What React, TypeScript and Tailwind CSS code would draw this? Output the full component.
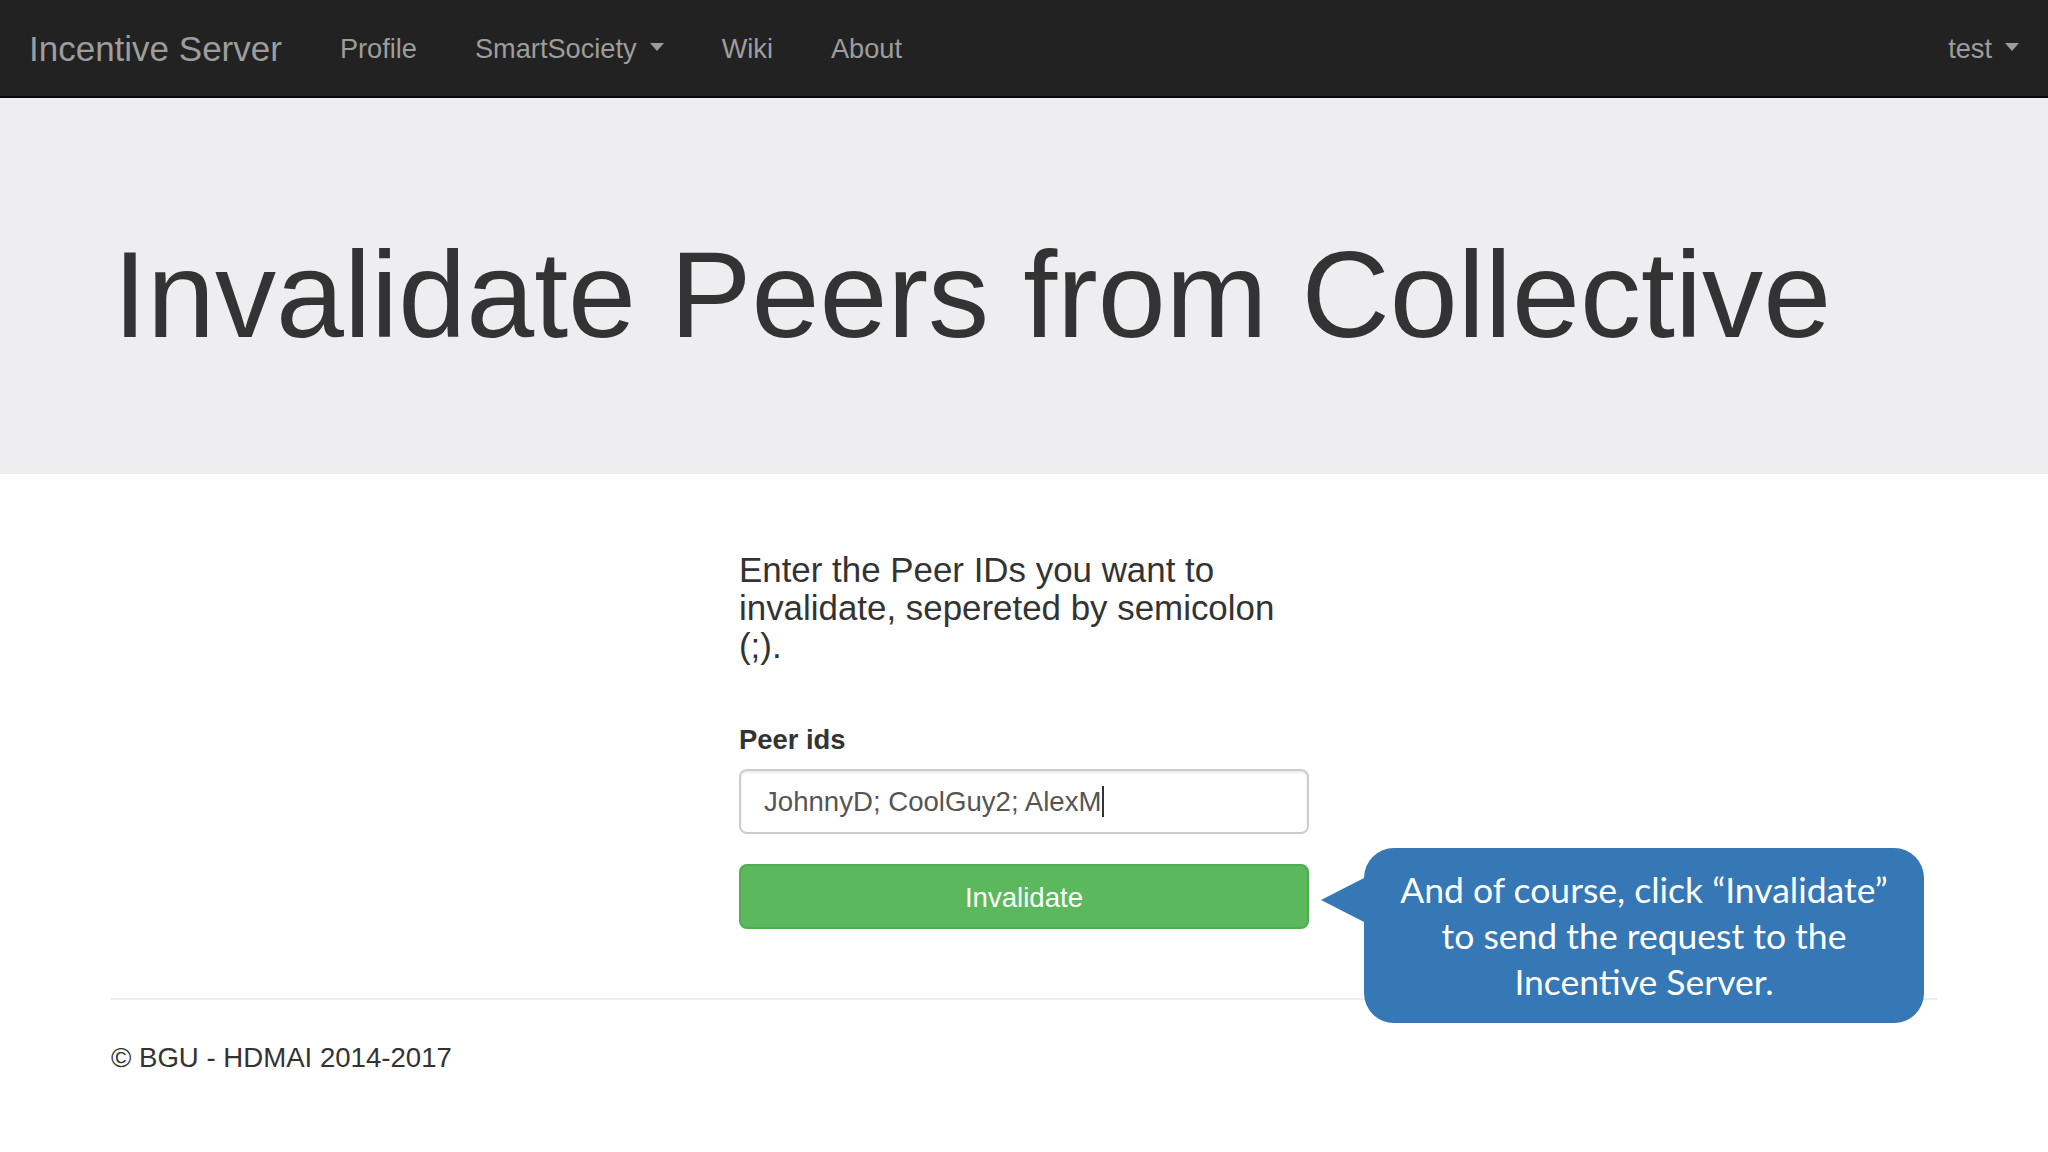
import React from "react";

function Caret() {
  return (
    <span className="inline-block w-0 h-0 border-t-[8px] border-t-[#9d9d9d] border-x-[7px] border-x-transparent ml-[13px] align-middle relative top-[-2px]" />
  );
}

export default function App() {
  return (
    <div className="relative min-h-[1152px] w-[2048px] bg-white font-['Liberation_Sans',Arial,sans-serif] text-[#333] overflow-hidden">
      {/* Navbar */}
      <nav className="h-[98px] bg-[#222] border-b-2 border-[#080808] flex items-center text-[#9d9d9d] pt-[2px]">
        <span className="pl-[29px] pr-[29px] text-[35px] leading-[40px]">Incentive Server</span>
        <span className="px-[29px] text-[27.2px] leading-[38px]">Profile</span>
        <span className="px-[29px] text-[27.2px] leading-[38px] flex items-center">
          SmartSociety
          <Caret />
        </span>
        <span className="px-[29px] text-[27.2px] leading-[38px]">Wiki</span>
        <span className="px-[29px] text-[27.2px] leading-[38px]">About</span>
        <span className="ml-auto px-[29px] text-[27.2px] leading-[38px] flex items-center">
          test
          <Caret />
        </span>
      </nav>

      {/* Jumbotron */}
      <div className="bg-[#eeeef0] pt-[93px] pb-[93px] px-[113px]">
        <h1 className="mt-[37px] mb-[19px] text-[122.2px] leading-[134px] text-[#333] whitespace-nowrap">
          Invalidate Peers from Collective
        </h1>
      </div>

      {/* Main */}
      <div className="px-[111px]">
        <div className="w-[570px] mx-auto">
          <h4 className="mt-[77px] text-[34.9px] leading-[38.2px] text-[#333]">
            Enter the Peer IDs you want to invalidate, sepereted by semicolon (;).
          </h4>
          <label className="block mt-[55px] mb-[9.5px] text-[27.4px] leading-[38.6px] font-bold text-[#333]">
            Peer ids
          </label>
          <div className="h-[65px] border-2 border-[#ccc] rounded-[8px] bg-white px-[23px] flex items-center text-[27.6px] text-[#555] shadow-[inset_0_2px_2px_rgba(0,0,0,0.075)]">
            <span>JohnnyD; CoolGuy2; AlexM</span>
            <span className="inline-block w-[2px] h-[31px] bg-[#333] ml-[1px]" />
          </div>
          <button className="mt-[30px] w-full h-[65px] bg-[#5cb85c] border-2 border-[#4cae4c] rounded-[8px] text-white text-[27.6px] flex items-center justify-center pt-[2px]">
            Invalidate
          </button>
        </div>
        <div className="mt-[69px] border-t-2 border-[#eeeeee]" />
        <div className="mt-[39px] text-[27.6px] leading-[38.6px] text-[#333]">© BGU - HDMAI 2014-2017</div>
      </div>

      {/* Callout */}
      <div className="absolute left-[1320px] top-[848px] flex">
        <svg width="46" height="175" viewBox="0 0 46 175" className="block">
          <polygon points="1,52 46,29 46,75" fill="#3677b6" />
        </svg>
        <div className="-ml-[2px] w-[560px] h-[175px] rounded-[30px] bg-[#3677b6] flex flex-col items-center justify-center text-white font-['Lato','Open_Sans',sans-serif] text-[35.5px] leading-[46px] text-center">
          <div>And of course, click “Invalidate”</div>
          <div>to send the request to the</div>
          <div>Incentive Server.</div>
        </div>
      </div>
    </div>
  );
}
